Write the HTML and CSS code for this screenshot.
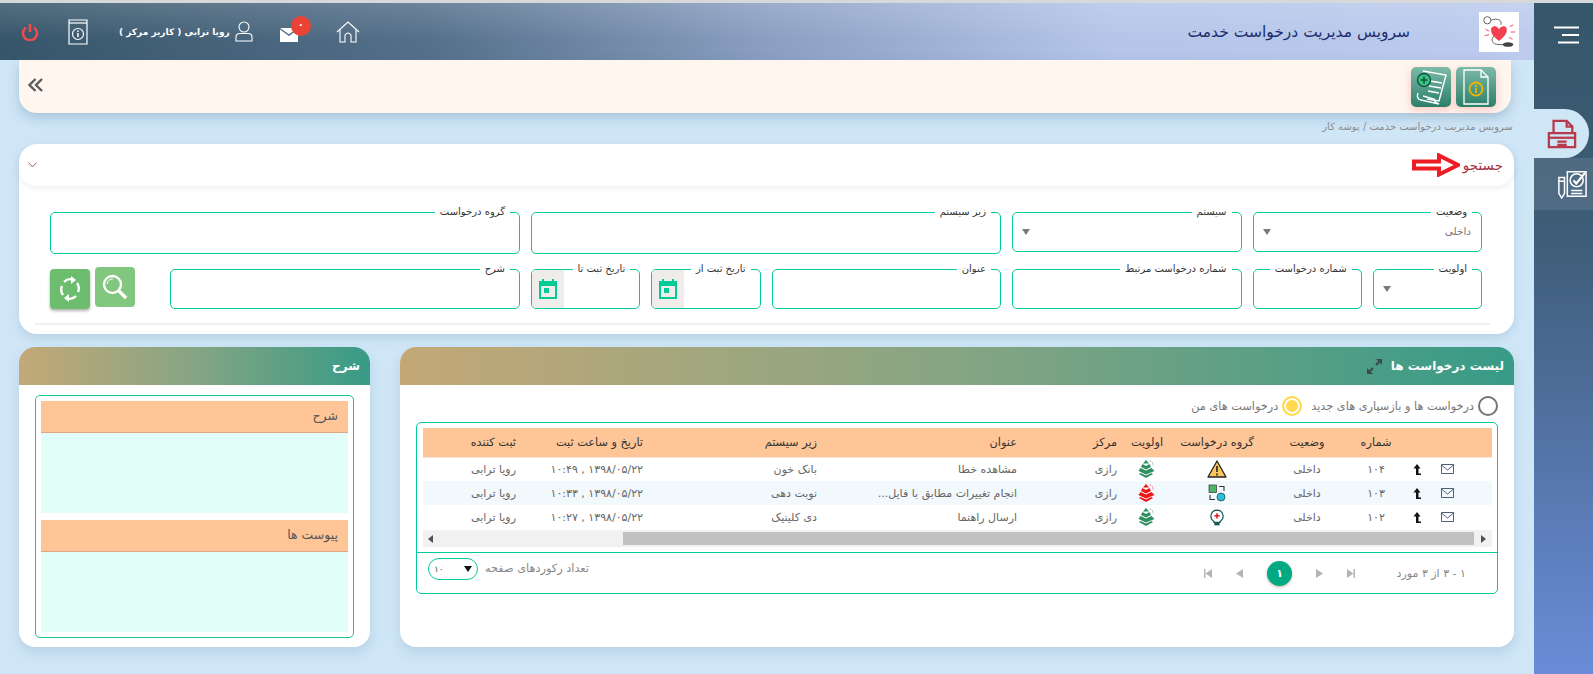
FILE: index.html
```html
<!DOCTYPE html>
<html lang="fa" dir="rtl">
<head>
    <meta charset="UTF-8">
    <title>سرویس مدیریت درخواست خدمت</title>
    <link rel="stylesheet" href="styles.css">
</head>
<body>
<div class="app">
    <!-- right menu -->
    <aside class="sidebar">
        <div class="side-top">
            <svg class="burger" width="26" height="18" viewBox="0 0 26 18"><path d="M1 1.5H26M9 9H26M5 16.5H26" stroke="#fff" stroke-width="2" fill="none"/></svg>
        </div>
        <div class="side-item active">
            <svg width="30" height="30" viewBox="0 0 32 32" fill="none" stroke="#b8394a" stroke-width="2.4"><path d="M7 15V2H21L27 8V15"/><path d="M21 2V8H27"/><path d="M2 30V15H30V30Z"/><path d="M2 20H30"/><path d="M11 24H21M11 27.5H21"/></svg>
        </div>
        <div class="side-item check">
            <svg width="30" height="30" viewBox="0 0 32 32" fill="none" stroke="#fff" stroke-width="1.6"><path d="M2 9H8V26L5 31L2 26Z"/><path d="M2 13H8"/><path d="M11 3V29H31V3Z"/><path d="M15 23H27M15 26H27"/><circle cx="21" cy="12" r="7"/><path d="M17.5 12L20.5 15.5L30 4" stroke-width="2.2"/></svg>
        </div>
    </aside>

    <main class="main">
        <header class="topbar">
            <div class="brand">
                <div class="logo">
                    <svg width="36" height="36" viewBox="0 0 40 40" fill="none"><circle cx="7" cy="7" r="4" stroke="#555"/><path d="M11 7C18 4 24 7 22 12M15 24C10 28 12 34 20 34H26" stroke="#555"/><path d="M20 30C11 23 10 18 12 15C15 12 19 14 20 17C21 14 26 12 28 15C30 19 28 24 20 30Z" fill="#f1414f"/><path d="M5 17L9 19M4 24L9 23M32 14L36 12M33 20H38M31 26L35 28" stroke="#f1414f"/><ellipse cx="30" cy="34" rx="6" ry="2.5" fill="#444"/></svg>
                </div>
                <h1>سرویس مدیریت درخواست خدمت</h1>
            </div>
            <div class="top-tools">
                <svg class="tool-home" width="24" height="22" viewBox="0 0 24 22" fill="none" stroke="#fff" stroke-width="1.1"><path d="M1 11L12 1L23 11"/><path d="M4 9V21H9V14Q12 10 15 14V21H20V9"/></svg>
                <div class="mail-box">
                    <svg width="19" height="14" viewBox="0 0 19 14"><path d="M0 1.5V14H18V1.5L9 8Z" fill="#fff"/><path d="M0 0H18L9 6.2Z" fill="#fff"/></svg>
                    <span class="badge">۰</span>
                </div>
                <div class="user">
                    <svg width="18" height="21" viewBox="0 0 18 21" fill="none" stroke="#fff" stroke-width="1.1"><circle cx="9" cy="6" r="5"/><path d="M1 20V16Q1 12.500 5 12.500H13Q17 12.500 17 16V20Z"/></svg>
                    <span>رویا ترابی ( کاربر مرکز )</span>
                </div>
                <svg class="tool-info" width="20" height="26" viewBox="0 0 20 26" fill="none" stroke="#fff" stroke-width="1.2"><path d="M1 1H19V25H1Z"/><path d="M1 4H19"/><circle cx="10" cy="15" r="5.500"/><path d="M10 14V18M10 11.500V13" stroke-width="1.500"/></svg>
                <svg class="tool-power" width="18" height="18" viewBox="0 0 18 18" fill="none" stroke="#ec4c4c" stroke-width="2.600"><path d="M5 4.500A7 7 0 1 0 13 4.500"/><path d="M9 1V9"/></svg>
            </div>
        </header>

        <div class="toolbar">
            <div class="tool-btns">
                <button class="tool-btn" type="button">
                    <svg width="28" height="36" viewBox="0 0 28 36" fill="none" stroke="#fff" stroke-width="1.300"><path d="M2 1H19L26 8V35H2Z"/><path d="M19 1V8H26"/><circle cx="14" cy="20" r="6.500" stroke="#f0b400" stroke-width="1.800"/><path d="M14 19V24M14 16V18" stroke="#f0b400" stroke-width="1.800"/></svg>
                </button>
                <button class="tool-btn" type="button">
                    <svg width="32" height="36" viewBox="0 0 32 36" fill="none" stroke="#fff" stroke-width="1.400"><path d="M8 2L31 6L24 32L12 30"/><path d="M15 12L27 14M14 17L26 19M13 22L24 24"/><path d="M3 24Q1 30 6 31L24 35Q19 33 19 30L8 27"/><circle cx="9" cy="11" r="6.500" fill="#35c47f" stroke="#17513f"/><path d="M9 7.500V14.500M5.500 11H12.500" stroke="#17513f" stroke-width="1.600"/></svg>
                </button>
            </div>
            <svg class="collapse-left" width="15" height="14" viewBox="0 0 15 14" fill="none" stroke="#5c5c5c" stroke-width="2.400"><path d="M7.500 1L1.500 7L7.500 13M14 1L8 7L14 13"/></svg>
        </div>

        <div class="crumb">سرویس مدیریت درخواست خدمت / پوشه کار</div>

        <section class="search-card">
            <div class="search-head">
                <span class="search-title">جستجو</span>
                <svg width="48" height="24" viewBox="0 0 48 24"><path d="M2 8.500H27V2.500L46 12L27 21.500V15.500H2Z" fill="#fff" stroke="#ee1c25" stroke-width="4"/></svg>
                <svg class="search-toggle" width="9" height="6" viewBox="0 0 9 6" fill="none" stroke="#a85a5a"><path d="M.5 .5L4.500 5L8.500 .5"/></svg>
            </div>
            <div class="filters">
                <div class="field span-2"><label class="field-label">وضعیت</label><span class="field-value">داخلی</span><i class="caret"></i></div>
                <div class="field span-2"><label class="field-label">سیستم</label><i class="caret"></i></div>
                <div class="field span-4 tall"><label class="field-label">زیر سیستم</label></div>
                <div class="field span-4 tall"><label class="field-label">گروه درخواست</label></div>

                <div class="field"><label class="field-label">اولویت</label><i class="caret"></i></div>
                <div class="field"><label class="field-label">شماره درخواست</label></div>
                <div class="field span-2"><label class="field-label">شماره درخواست مرتبط</label></div>
                <div class="field span-2"><label class="field-label">عنوان</label></div>
                <div class="field"><label class="field-label">تاریخ ثبت از</label><span class="date-btn"><svg width="18" height="20" viewBox="0 0 18 20"><path d="M3 0H5V2H13V0H15V2H18V20H0V2H3Z M2 7V18H16V7Z M5 9H10V14H5Z" fill="#03cb98" fill-rule="evenodd"/></svg></span></div>
                <div class="field"><label class="field-label">تاریخ ثبت تا</label><span class="date-btn"><svg width="18" height="20" viewBox="0 0 18 20"><path d="M3 0H5V2H13V0H15V2H18V20H0V2H3Z M2 7V18H16V7Z M5 9H10V14H5Z" fill="#03cb98" fill-rule="evenodd"/></svg></span></div>
                <div class="field span-3"><label class="field-label">شرح</label></div>
                <div class="filter-btns">
                    <button class="green-btn light" type="button">
                        <svg width="26" height="26" viewBox="0 0 26 26" fill="none" stroke="#fff" stroke-width="2.400"><circle cx="10.500" cy="10.500" r="8.500"/><path d="M5 10A6 6 0 0 1 11 5" stroke-width="1"/><path d="M17 17L24 24" stroke-width="3.400"/></svg>
                    </button>
                    <button class="green-btn" type="button">
                        <svg width="22" height="26" viewBox="0 0 22 26" fill="none" stroke="#fff" stroke-width="2.400"><path d="M5 6A9 9 0 0 1 15 4"/><path d="M17 20A9 9 0 0 1 7 22"/><path d="M19 16A9 9 0 0 0 18 7"/><path d="M3 10A9 9 0 0 0 4 19"/><path d="M12 0V8L17 4Z M10 18V26L5 22Z" fill="#fff" stroke="none"/></svg>
                    </button>
                </div>
            </div>
            <div class="search-line"></div>
        </section>

        <div class="panels">
            <section class="panel panel-list">
                <div class="panel-head">
                    <h2>لیست درخواست ها</h2>
                    <svg width="15" height="15" viewBox="0 0 15 15" fill="#3c4a4c"><path d="M9 0H15V6L12.800 3.800L9.800 6.800L8.200 5.200L11.200 2.200Z"/><path d="M6 15H0V9L2.200 11.200L5.200 8.200L6.800 9.800L3.800 12.800Z"/></svg>
                </div>
                <div class="radios">
                    <span class="radio"></span><span class="radio-text">درخواست ها و بازسپاری های جدید</span>
                    <span class="radio on"></span><span class="radio-text">درخواست های من</span>
                </div>
                <div class="grid-box">
                    <div class="grid-inner">
                        <table class="grid">
                            <colgroup>
                                <col class="c-mail"><col class="c-up"><col class="c-no"><col class="c-state"><col class="c-group"><col class="c-prio"><col class="c-center"><col class="c-title"><col class="c-sub"><col class="c-date"><col class="c-user">
                            </colgroup>
                            <thead>
                                <tr>
                                    <th></th><th></th>
                                    <th>شماره</th><th>وضعیت</th><th>گروه درخواست</th><th>اولویت</th>
                                    <th class="start">مرکز</th><th class="start">عنوان</th><th class="start">زیر سیستم</th><th class="start">تاریخ و ساعت ثبت</th><th class="start">ثبت کننده</th>
                                </tr>
                            </thead>
                            <tbody>
                                <tr>
                                    <td class="mail-cell"><svg class="env" width="13" height="10" viewBox="0 0 13 10"><use href="#env"/></svg></td>
                                    <td><svg width="8" height="11" viewBox="0 0 8 11"><use href="#up"/></svg></td>
                                    <td>۱۰۴</td><td>داخلی</td>
                                    <td><svg width="20" height="18" viewBox="0 0 20 18"><use href="#warn"/></svg></td>
                                    <td><svg class="prio-green" width="18" height="18" viewBox="0 0 18 18"><use href="#prio"/></svg></td>
                                    <td class="start">رازی</td><td class="start">مشاهده خطا</td><td class="start">بانک خون</td><td class="start">۱۳۹۸/۰۵/۲۲ , ۱۰:۴۹</td><td class="start">رویا ترابی</td>
                                </tr>
                                <tr class="alt">
                                    <td class="mail-cell"><svg class="env" width="13" height="10" viewBox="0 0 13 10"><use href="#env"/></svg></td>
                                    <td><svg width="8" height="11" viewBox="0 0 8 11"><use href="#up"/></svg></td>
                                    <td>۱۰۳</td><td>داخلی</td>
                                    <td><svg width="18" height="18" viewBox="0 0 18 18"><use href="#change"/></svg></td>
                                    <td><svg class="prio-red" width="18" height="18" viewBox="0 0 18 18"><use href="#prio"/></svg></td>
                                    <td class="start">رازی</td><td class="start">انجام تغییرات مطابق با فایل...</td><td class="start">نوبت دهی</td><td class="start">۱۳۹۸/۰۵/۲۲ , ۱۰:۳۳</td><td class="start">رویا ترابی</td>
                                </tr>
                                <tr>
                                    <td class="mail-cell"><svg class="env" width="13" height="10" viewBox="0 0 13 10"><use href="#env"/></svg></td>
                                    <td><svg width="8" height="11" viewBox="0 0 8 11"><use href="#up"/></svg></td>
                                    <td>۱۰۲</td><td>داخلی</td>
                                    <td><svg width="14" height="19" viewBox="0 0 16 19"><use href="#bulb"/></svg></td>
                                    <td><svg class="prio-green" width="18" height="18" viewBox="0 0 18 18"><use href="#prio"/></svg></td>
                                    <td class="start">رازی</td><td class="start">ارسال راهنما</td><td class="start">دی کلینیک</td><td class="start">۱۳۹۸/۰۵/۲۲ , ۱۰:۲۷</td><td class="start">رویا ترابی</td>
                                </tr>
                            </tbody>
                        </table>
                        <div class="hscroll">
                            <i class="sb-arrow right"></i>
                            <div class="sb-thumb"></div>
                            <i class="sb-arrow left"></i>
                        </div>
                    </div>
                    <div class="grid-foot">
                        <span class="pager-info">۱ - ۳ از ۳ مورد</span>
                        <div class="pager">
                            <svg width="8" height="9" viewBox="0 0 8 9"><path d="M0 0H1.500V9H0Z M1.500 4.500L8 0V9Z" fill="#b5b5b5" transform="matrix(-1 0 0 1 8 0)"/></svg>
                            <svg width="7" height="9" viewBox="0 0 7 9"><path d="M0 0L7 4.500L0 9Z" fill="#b5b5b5"/></svg>
                            <span class="page-on">۱</span>
                            <svg width="7" height="9" viewBox="0 0 7 9"><path d="M7 0L0 4.500L7 9Z" fill="#b5b5b5"/></svg>
                            <svg width="8" height="9" viewBox="0 0 8 9"><path d="M0 0H1.500V9H0Z M1.500 4.500L8 0V9Z" fill="#b5b5b5"/></svg>
                        </div>
                        <div class="page-size">
                            <span class="size-label">تعداد رکوردهای صفحه</span>
                            <div class="size-select"><i class="size-caret"></i><span>۱۰</span></div>
                        </div>
                    </div>
                </div>
            </section>

            <section class="panel panel-side">
                <div class="panel-head"><h2>شرح</h2></div>
                <div class="side-box">
                    <h3 class="side-title">شرح</h3>
                    <div class="side-body"></div>
                    <h3 class="side-title second">پیوست ها</h3>
                    <div class="side-body"></div>
                </div>
            </section>
        </div>
    </main>
</div>

<!-- shared table icons -->
<svg class="defs" width="0" height="0">
    <defs>
        <g id="env" fill="none" stroke="#3d4d6b" stroke-width=".9"><path d="M.5 .5H12.500V9.500H.5Z"/><path d="M.5 1L6.500 6L12.500 1"/></g>
        <path id="up" d="M4 0L7.500 4.500H5.500V9.500H8V11H3V4.500H.5Z" fill="#111"/>
        <g id="warn"><path d="M10 1L19 17H1Z" fill="#fbc65a" stroke="#222" stroke-width="1.300" stroke-linejoin="round"/><path d="M10 6V12M10 13.500V15.500" stroke="#222" stroke-width="1.600"/></g>
        <g id="change"><rect x="1" y="1" width="7.500" height="7.500" fill="#4cb56c" stroke="#333" stroke-width=".7"/><circle cx="13" cy="13" r="4" fill="#24c4dc" stroke="#333" stroke-width=".7"/><path d="M11 2.500H16V7M7 15.500H2V11" fill="none" stroke="#333" stroke-width="1.100"/></g>
        <g id="bulb"><path d="M8 1A7 7 0 0 1 11.500 14V15H4.500V14A7 7 0 0 1 8 1Z" fill="#fff" stroke="#1c5a5a" stroke-width="1.400"/><path d="M8 4.500V10.500M5 7.500H11" stroke="#e21e2e" stroke-width="1.800"/><path d="M5 15.500H11V18.500H5Z" fill="#1c5a5a"/></g>
        <g id="prio"><path d="M8 0L11 3.500H5Z M4.500 4L8 6L11.500 4L13 7L8 9.500L3 7Z M2.500 8L8 10.500L13.500 8L16.500 11L8 14.500L0.500 11Z M2.500 13L8 15.500L13.500 13L15 14L8 18L1 14Z"/><path d="M12 1Q15.500 2 15 6" fill="none" stroke="currentColor" stroke-width=".8" stroke-dasharray="1 1"/></g>
    </defs>
</svg>
</body>
</html>
```

FILE: styles.css
```css
* {
    box-sizing: border-box;
}

html, body {
    margin: 0;
    padding: 0;
}

body {
    font-family: "DejaVu Sans", sans-serif;
    font-size: 11px;
    color: #555;
    background: #cfe6f7;
    border-top: 3px solid #d6d8da;
}

.app {
    display: flex;
    height: 671px;
    overflow: hidden;
}

/* right menu */
.sidebar {
    width: 59px;
    flex: none;
    background: linear-gradient(180deg, #36566a 0%, #3e5d78 35%, #6a8cd8 100%);
}

.side-top {
    height: 106px;
    padding: 23px 14px 0 0;
}

.burger {
    display: block;
}

.side-item {
    height: 52px;
    display: flex;
    align-items: center;
    justify-content: center;
    background: rgba(255, 255, 255, 0.1);
}

.side-item.check {
    padding-left: 16px;
}

.side-item.active {
    height: 49px;
    margin-right: 4px;
    background: #cfe6f7;
    border-radius: 0 25px 25px 0;
}

.main {
    flex: 1;
    min-width: 0;
    padding: 0 20px 0 19px;
}

/* top bar */
.topbar {
    height: 57px;
    margin: 0 -20px 0 -19px;
    display: flex;
    justify-content: space-between;
    align-items: center;
    padding: 0 15px 0 21px;
    background:
        linear-gradient(180deg, rgba(255, 255, 255, 0.14) 0%, rgba(255, 255, 255, 0) 65%),
        linear-gradient(82deg, #36556a 0%, #55708a 28%, #8b9fc2 50%, #b4c5e9 72%, #bccbee 100%);
}

.brand {
    display: flex;
    align-items: center;
    gap: 69px;
}

.logo {
    width: 40px;
    height: 40px;
    background: #fff;
    display: flex;
    align-items: center;
    justify-content: center;
}

.brand h1 {
    margin: 0;
    font-size: 15.5px;
    font-weight: 400;
    color: #1d2d6a;
}

.top-tools {
    display: flex;
    align-items: center;
    color: #fff;
}

.tool-home {
    margin-left: 37px;
}

.mail-box {
    position: relative;
    display: flex;
    margin-left: 27px;
    padding-top: 6px;
}

.badge {
    position: absolute;
    top: -6px;
    left: 11px;
    width: 20px;
    height: 20px;
    border-radius: 50%;
    background: #ea4335;
    color: #fff;
    font-size: 10px;
    font-weight: 700;
    line-height: 18px;
    text-align: center;
}

.user {
    display: flex;
    align-items: center;
    gap: 5px;
    font-size: 9px;
    font-weight: 700;
    margin-left: 31px;
    white-space: nowrap;
}

.tool-info {
    margin-left: 29px;
}

/* action strip */
.toolbar {
    height: 53px;
    margin-right: 3px;
    padding: 7px 15px 0 9px;
    display: flex;
    justify-content: space-between;
    background: #fff6ef;
    border-radius: 0 0 18px 18px;
    box-shadow: 0 5px 12px rgba(70, 110, 140, 0.28);
}

.tool-btns {
    display: flex;
    gap: 5px;
}

.tool-btn {
    width: 40px;
    height: 40px;
    padding: 0;
    border: 0;
    border-radius: 5px;
    background: linear-gradient(180deg, #7dbaa8 0%, #2b8069 100%);
    box-shadow: 0 3px 8px rgba(240, 130, 130, 0.4);
    display: flex;
    align-items: center;
    justify-content: center;
}

.collapse-left {
    margin-top: 11px;
}

.crumb {
    height: 31px;
    padding: 6px 1px 0 0;
    font-size: 10px;
    line-height: 15px;
    color: #8a8a8a;
    white-space: nowrap;
}

/* search box */
.search-card {
    height: 190px;
    background: #fff;
    border-radius: 18px;
    box-shadow: 0 4px 10px rgba(70, 110, 140, 0.16);
}

.search-head {
    height: 42px;
    padding: 0 11px 0 9px;
    display: flex;
    align-items: center;
    gap: 3px;
    border-radius: 18px;
    box-shadow: 0 3px 6px rgba(0, 0, 0, 0.06);
}

.search-title {
    font-size: 13.500px;
    color: #a5303f;
}

.search-toggle {
    margin-right: auto;
}

.filters {
    padding: 26px 32px 0 31px;
    display: grid;
    grid-template-columns: repeat(12, 1fr);
    column-gap: 11px;
    row-gap: 15px;
    align-items: start;
}

.field {
    position: relative;
    height: 40px;
    border: 1px solid #04cb9a;
    border-radius: 5px;
}

.field.tall { height: 42px; }
.span-2 { grid-column: span 2; }
.span-3 { grid-column: span 3; }
.span-4 { grid-column: span 4; }

.field-label {
    position: absolute;
    top: -9px;
    right: 9px;
    padding: 0 5px;
    background: #fff;
    font-size: 10px;
    line-height: 15px;
    color: #333;
    white-space: nowrap;
}

.field-value {
    position: absolute;
    top: 11px;
    right: 10px;
    font-size: 10.500px;
    line-height: 15px;
    color: #777;
}

.caret {
    position: absolute;
    top: 16px;
    left: 9px;
    border: 4px solid transparent;
    border-top: 6px solid #7a7a7a;
    border-bottom: 0;
}

.date-btn {
    position: absolute;
    top: 0;
    bottom: 0;
    left: 0;
    width: 32px;
    background: #f0ecea;
    border-radius: 4px 0 0 4px;
    display: flex;
    align-items: center;
    justify-content: center;
}

.filter-btns {
    display: flex;
    gap: 5px;
    justify-content: flex-end;
}

.green-btn {
    width: 40px;
    height: 40px;
    padding: 0;
    border: 0;
    border-radius: 4px;
    background: #6dbd6f;
    box-shadow: 0 2px 3px rgba(0, 0, 0, 0.3);
    display: flex;
    align-items: center;
    justify-content: center;
}

.green-btn.light {
    background: #81c77f;
    box-shadow: none;
    margin-top: -2px;
}

.search-line {
    height: 2px;
    margin: 14px 24px 0 16px;
    background: #efefef;
}

/* bottom panels */
.panels {
    display: flex;
    gap: 30px;
    margin-top: 13px;
    height: 300px;
}

.panel {
    background: #fff;
    border-radius: 16px;
    box-shadow: 0 6px 12px rgba(70, 110, 140, 0.16);
}

.panel-list {
    flex: 1;
    min-width: 0;
}

.panel-side {
    flex: none;
    width: 351px;
}

.panel-head {
    height: 38px;
    padding: 0 10px;
    display: flex;
    align-items: center;
    gap: 9px;
    border-radius: 16px 16px 0 0;
    background: linear-gradient(90deg, #c4a877 0%, #86a583 50%, #379b87 100%);
}

.panel-head h2 {
    margin: 0;
    font-size: 12px;
    font-weight: 700;
    color: #fff;
}

.radios {
    display: flex;
    align-items: center;
    height: 20px;
    margin: 11px 16px 6px;
    color: #777;
}

.radio {
    width: 20px;
    height: 20px;
    flex: none;
    border: 2px solid #757575;
    border-radius: 50%;
    background: #fff;
}

.radio.on {
    border-color: #ffd84d;
    background: #ffd84d;
    box-shadow: inset 0 0 0 2px #fff;
    margin-right: 9px;
}

.radio-text {
    margin-right: 4px;
    font-size: 11.300px;
    white-space: nowrap;
}

.grid-box {
    margin: 0 16px 0 16px;
    height: 172px;
    border: 1px solid #04cb9a;
    border-radius: 5px;
}

.grid-inner {
    height: 130px;
    padding: 5px 5px 0 4px;
    border-bottom: 1px solid #04cb9a;
}

.grid {
    width: 1069px;
    table-layout: fixed;
    border-collapse: collapse;
}

.c-mail { width: 60px; }
.c-up { width: 30px; }
.c-no { width: 52px; }
.c-state { width: 86px; }
.c-group { width: 94px; }
.c-prio { width: 46px; }
.c-center { width: 100px; }
.c-title { width: 200px; }
.c-sub { width: 174px; }
.c-date { width: 127px; }
.c-user { width: 100px; }

.grid th {
    height: 29px;
    padding: 0;
    background: #fec597;
    border-bottom: 1px solid #f3e6dc;
    font-size: 11.300px;
    font-weight: 400;
    color: #333;
    text-align: center;
    white-space: nowrap;
}

.grid td {
    height: 24px;
    padding: 0;
    font-size: 11px;
    color: #666;
    text-align: center;
    white-space: nowrap;
    overflow: hidden;
}

.grid td svg {
    display: block;
    margin: 0 auto;
}

.grid .start {
    text-align: right;
    padding-right: 7px;
}

.grid .mail-cell {
    padding-right: 30px;
}

.grid .alt td {
    background: #f1f9fd;
}

.prio-green { color: #2f8f5f; fill: #2f8f5f; }
.prio-red { color: #f01414; fill: #f01414; }

.hscroll {
    width: 1069px;
    height: 17px;
    margin-top: 1px;
    display: flex;
    align-items: center;
    background: #f1f1f1;
}

.sb-thumb {
    height: 13px;
    width: 851px;
    background: #c1c1c1;
}

.sb-arrow {
    flex: none;
    width: 0;
    height: 0;
    border: 4px solid transparent;
}

.sb-arrow.right {
    border-right: 0;
    border-left: 5px solid #505050;
    margin: 0 6px 0 7px;
}

.sb-arrow.left {
    border-left: 0;
    border-right: 5px solid #505050;
    margin: 0 auto 0 5px;
}

.grid-foot {
    height: 40px;
    display: flex;
    align-items: center;
    padding: 0 31px 0 11px;
}

.pager-info {
    width: 111px;
    font-size: 11px;
    color: #888;
    white-space: nowrap;
}

.pager {
    display: flex;
    align-items: center;
    gap: 24px;
    color: #b5b5b5;
}

.page-on {
    width: 25px;
    height: 25px;
    border-radius: 50%;
    background: #03a983;
    box-shadow: 0 1px 3px rgba(0, 0, 0, 0.3);
    color: #fff;
    font-size: 11px;
    font-weight: 700;
    line-height: 25px;
    text-align: center;
}

.page-size {
    margin-right: auto;
    display: flex;
    align-items: center;
    gap: 7px;
    margin-top: -9px;
}

.size-label {
    font-size: 11.300px;
    color: #888;
    white-space: nowrap;
}

.size-select {
    width: 50px;
    height: 22px;
    padding: 0 5px;
    border: 1px solid #04cb9a;
    border-radius: 11px;
    display: flex;
    align-items: center;
    justify-content: space-between;
    font-size: 9px;
    color: #555;
}

.size-caret {
    border: 4px solid transparent;
    border-top: 6px solid #111;
    border-bottom: 0;
}

.side-box {
    height: 243px;
    margin: 10px 16px 0;
    padding: 5px;
    border: 1px solid #17c795;
    border-radius: 5px;
}

.side-title {
    margin: 0;
    height: 32px;
    padding-right: 10px;
    border-bottom: 1px solid #e2a585;
    background: #fec597;
    font-size: 12.500px;
    font-weight: 400;
    line-height: 30px;
    color: #555;
}

.side-title.second {
    margin-top: 7px;
}

.side-body {
    height: 80px;
    background: #e1fef9;
}

.defs {
    position: absolute;
}
```
